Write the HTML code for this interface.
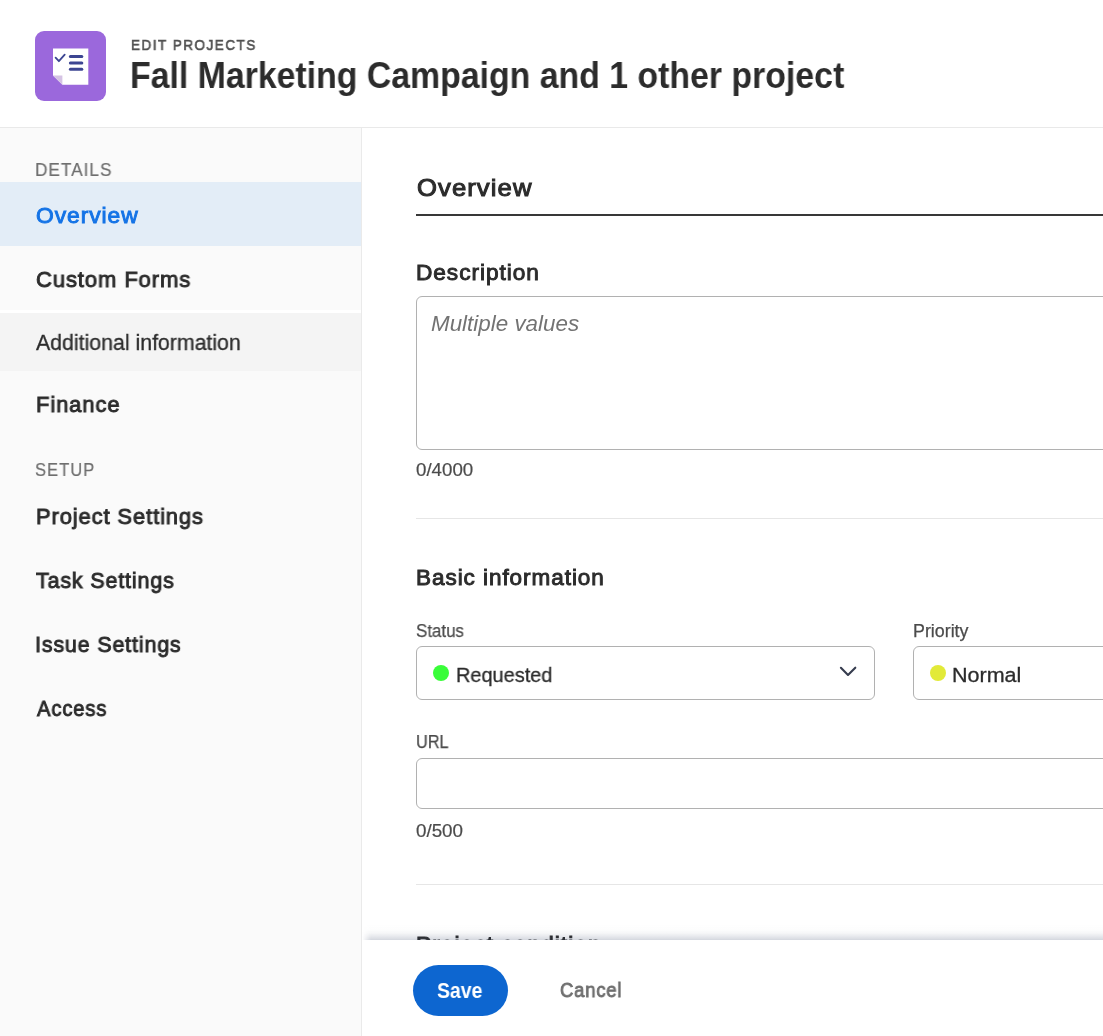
<!DOCTYPE html>
<html lang="en">
<head>
<meta charset="utf-8">
<title>Edit Projects</title>
<style>
html,body{margin:0;padding:0;}
body{width:1103px;height:1036px;position:relative;overflow:hidden;background:#fff;font-family:"Liberation Sans",Arial,sans-serif;}
header,nav,main,footer,section{display:block;position:static;margin:0;padding:0;}
.abs{position:absolute;}
.t{position:absolute;margin:0;padding:0;white-space:nowrap;line-height:1;transform-origin:0 50%;will-change:transform;text-decoration:none;}
#sidebar{left:0;top:128px;width:361px;height:908px;background:#fafafa;border-right:1px solid #eaeaea;}
#hdrline{left:0;top:127px;width:1103px;height:1px;background:#e9e9e9;}
.box{position:absolute;box-sizing:border-box;border:1px solid #b1b1b1;border-radius:6px;background:#fff;}
.dot{position:absolute;width:16px;height:16px;border-radius:50%;}
.hr{position:absolute;left:416px;width:687px;height:1px;background:#e6e6e6;}
</style>
</head>
<body>
<header>
<svg class="abs" style="left:35px;top:31px" width="71" height="70" viewBox="0 0 71 70">
<rect x="0" y="0" width="71" height="70" rx="9" ry="9" fill="#9b68dc"/>
<polygon points="18,17.4 53.3,17.4 53.3,53.8 27.4,53.8 18,44.4" fill="#ffffff"/>
<polygon points="18,44.4 27.4,44.4 27.4,53.8" fill="#d5c3e4"/>
<polyline points="20.6,26.6 23.9,30.2 29.7,23.6" fill="none" stroke="#3c4592" stroke-width="1.8" stroke-linecap="round" stroke-linejoin="round"/>
<line x1="35.4" y1="25.4" x2="46.8" y2="25.4" stroke="#3c4592" stroke-width="3" stroke-linecap="round"/>
<line x1="35.4" y1="31.9" x2="46.8" y2="31.9" stroke="#3c4592" stroke-width="3" stroke-linecap="round"/>
<line x1="35.4" y1="38.2" x2="46.8" y2="38.2" stroke="#3c4592" stroke-width="3" stroke-linecap="round"/>
</svg>
<span class="t" style="left:130.8px;top:38.0px;font-size:14.5px;font-weight:400;color:#505050;transform:scaleX(0.9297);-webkit-text-stroke:0.61px #505050;letter-spacing:0.112em;">EDIT PROJECTS</span>
<h1 class="t" style="left:129.7px;top:58.0px;font-size:36px;font-weight:700;color:#2c2c2c;transform:scaleX(0.9397);">Fall Marketing Campaign and 1 other project</h1>
<div id="hdrline" class="abs"></div>
</header>
<nav>
<div id="sidebar" class="abs"></div>
<div class="abs" style="left:0;top:182px;width:361px;height:64px;background:#e3edf7"></div>
<div class="abs" style="left:0;top:310px;width:361px;height:3px;background:#ffffff"></div>
<div class="abs" style="left:0;top:313px;width:361px;height:58px;background:#f4f4f4"></div>
<h4 class="t" style="left:35.0px;top:161.0px;font-size:18px;font-weight:400;color:#6e6e6e;transform:scaleX(0.9531);-webkit-text-stroke:0.2px #6e6e6e;letter-spacing:0.06em;">DETAILS</h4>
<a class="t" style="left:35.8px;top:205.0px;font-size:22.5px;font-weight:400;color:#1473e6;transform:scaleX(1.0132);-webkit-text-stroke:0.95px #1473e6;letter-spacing:0.042em;">Overview</a>
<a class="t" style="left:35.8px;top:269.0px;font-size:22.5px;font-weight:400;color:#2c2c2c;transform:scaleX(0.9764);-webkit-text-stroke:0.95px #2c2c2c;letter-spacing:0.042em;">Custom Forms</a>
<a class="t" style="left:35.7px;top:333.0px;font-size:21.5px;font-weight:400;color:#2c2c2c;transform:scaleX(0.9906);-webkit-text-stroke:0.3px #2c2c2c;">Additional information</a>
<a class="t" style="left:35.5px;top:394.0px;font-size:22.5px;font-weight:400;color:#2c2c2c;transform:scaleX(0.9745);-webkit-text-stroke:0.95px #2c2c2c;letter-spacing:0.042em;">Finance</a>
<h4 class="t" style="left:35.0px;top:461.0px;font-size:18px;font-weight:400;color:#6e6e6e;transform:scaleX(0.9219);-webkit-text-stroke:0.2px #6e6e6e;letter-spacing:0.06em;">SETUP</h4>
<a class="t" style="left:35.8px;top:506.0px;font-size:22.5px;font-weight:400;color:#2c2c2c;transform:scaleX(0.9720);-webkit-text-stroke:0.95px #2c2c2c;letter-spacing:0.042em;">Project Settings</a>
<a class="t" style="left:36.4px;top:570.0px;font-size:22.5px;font-weight:400;color:#2c2c2c;transform:scaleX(0.9490);-webkit-text-stroke:0.95px #2c2c2c;letter-spacing:0.042em;">Task Settings</a>
<a class="t" style="left:34.9px;top:634.0px;font-size:22.5px;font-weight:400;color:#2c2c2c;transform:scaleX(0.9486);-webkit-text-stroke:0.95px #2c2c2c;letter-spacing:0.042em;">Issue Settings</a>
<a class="t" style="left:36.7px;top:698.0px;font-size:22.5px;font-weight:400;color:#2c2c2c;transform:scaleX(0.8987);-webkit-text-stroke:0.95px #2c2c2c;letter-spacing:0.042em;">Access</a>
</nav>
<main>
<section>
<h2 class="t" style="left:416.7px;top:176.0px;font-size:24.5px;font-weight:400;color:#2c2c2c;transform:scaleX(1.0466);-webkit-text-stroke:1.03px #2c2c2c;letter-spacing:0.042em;">Overview</h2>
<div class="abs" style="left:416px;top:214px;width:687px;height:2px;background:#383838"></div>
<h3 class="t" style="left:416.4px;top:262.0px;font-size:22.5px;font-weight:400;color:#2c2c2c;transform:scaleX(1.0069);-webkit-text-stroke:0.95px #2c2c2c;letter-spacing:0.042em;">Description</h3>
<div class="box" style="left:416px;top:296px;width:700px;height:154px"></div>
<span class="t" style="left:430.5px;top:313.0px;font-size:22.0px;font-weight:400;color:#737373;transform:scaleX(1.0178);font-style:italic;">Multiple values</span>
<span class="t" style="left:416.3px;top:462.0px;font-size:17.5px;font-weight:400;color:#4b4b4b;transform:scaleX(1.0681);-webkit-text-stroke:0.2px #4b4b4b;">0/4000</span>
<div class="hr" style="top:518px"></div>
</section>
<section>
<h3 class="t" style="left:416.4px;top:567.0px;font-size:22.5px;font-weight:400;color:#2c2c2c;transform:scaleX(1.0008);-webkit-text-stroke:0.95px #2c2c2c;letter-spacing:0.042em;">Basic information</h3>
<label class="t" style="left:415.7px;top:623.0px;font-size:17.5px;font-weight:400;color:#4b4b4b;transform:scaleX(0.9665);-webkit-text-stroke:0.25px #4b4b4b;">Status</label>
<div class="box" style="left:416px;top:646px;width:459px;height:54px"></div>
<div class="dot" style="left:433px;top:665px;background:#39fd39"></div>
<span class="t" style="left:455.5px;top:665.0px;font-size:20.5px;font-weight:400;color:#2c2c2c;transform:scaleX(0.9722);-webkit-text-stroke:0.3px #2c2c2c;">Requested</span>
<svg class="abs" style="left:836px;top:662px" width="24" height="20" viewBox="0 0 24 20"><polyline points="4.9,5.8 12,13 19.3,5.7" fill="none" stroke="#363c4e" stroke-width="2.1" stroke-linecap="round" stroke-linejoin="round"/></svg>
<label class="t" style="left:912.9px;top:623.0px;font-size:17.5px;font-weight:400;color:#4b4b4b;transform:scaleX(1.0185);-webkit-text-stroke:0.25px #4b4b4b;">Priority</label>
<div class="box" style="left:913px;top:646px;width:300px;height:54px"></div>
<div class="dot" style="left:930px;top:665px;background:#e2ea38"></div>
<span class="t" style="left:952.4px;top:665.0px;font-size:20.5px;font-weight:400;color:#2c2c2c;transform:scaleX(1.0500);-webkit-text-stroke:0.3px #2c2c2c;">Normal</span>
<label class="t" style="left:415.9px;top:734.0px;font-size:17.5px;font-weight:400;color:#4b4b4b;transform:scaleX(0.9294);-webkit-text-stroke:0.25px #4b4b4b;">URL</label>
<div class="box" style="left:416px;top:758px;width:700px;height:51px"></div>
<span class="t" style="left:416.3px;top:823.0px;font-size:17.5px;font-weight:400;color:#4b4b4b;transform:scaleX(1.0738);-webkit-text-stroke:0.2px #4b4b4b;">0/500</span>
<div class="hr" style="top:884px"></div>
</section>
<section>
<h3 class="t" style="left:416.4px;top:934.0px;font-size:22.5px;font-weight:400;color:#2c2c2c;transform:scaleX(1.0174);-webkit-text-stroke:0.95px #2c2c2c;letter-spacing:0.042em;">Project condition</h3>
</section>
</main>
<footer>
<div class="abs" style="left:362px;top:924px;width:741px;height:16px;background:linear-gradient(to bottom,rgba(50,65,100,0) 0px,rgba(50,65,100,0.006) 4.5px,rgba(50,65,100,0.012) 5.5px,rgba(50,65,100,0.02) 6.5px,rgba(50,65,100,0.03) 7.5px,rgba(50,65,100,0.04) 8.5px,rgba(50,65,100,0.054) 9.5px,rgba(50,65,100,0.078) 10.5px,rgba(50,65,100,0.097) 11.5px,rgba(50,65,100,0.12) 12.5px,rgba(50,65,100,0.146) 13.5px,rgba(50,65,100,0.17) 14.5px,rgba(50,65,100,0.2) 15.5px,rgba(50,65,100,0.21) 16px);-webkit-mask-image:linear-gradient(to right,transparent 0,#000 9px);mask-image:linear-gradient(to right,transparent 0,#000 9px)"></div>
<div class="abs" style="left:362px;top:940px;width:741px;height:96px;background:#fff"></div>
<div class="abs" style="left:413px;top:965px;width:95px;height:51px;border-radius:26px;background:#0d66d0"></div>
<span class="t" style="left:437.3px;top:981.0px;font-size:21.5px;font-weight:700;color:#ffffff;transform:scaleX(0.9039);">Save</span>
<span class="t" style="left:559.6px;top:980.0px;font-size:20px;font-weight:400;color:#6e6e6e;transform:scaleX(0.9246);-webkit-text-stroke:0.84px #6e6e6e;letter-spacing:0.042em;">Cancel</span>
</footer>
</body>
</html>
